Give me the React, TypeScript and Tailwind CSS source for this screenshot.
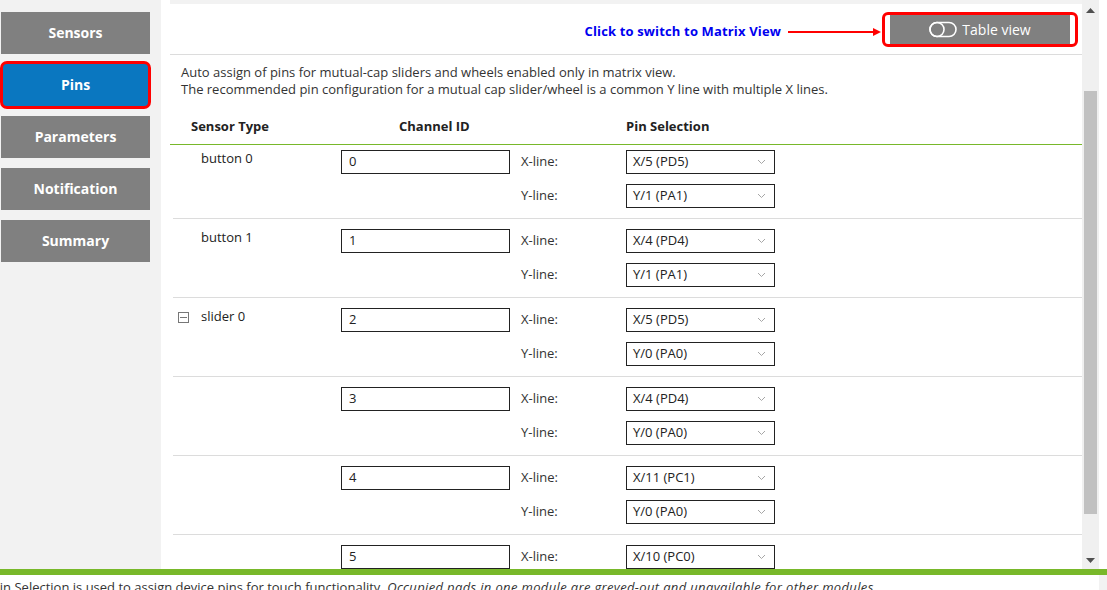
import React from 'react';

type PinRow = {
  name: string;
  group?: boolean;
  channel: string;
  x: string;
  y: string;
};

const rows: PinRow[] = [
  { name: 'button 0', channel: '0', x: 'X/5 (PD5)', y: 'Y/1 (PA1)' },
  { name: 'button 1', channel: '1', x: 'X/4 (PD4)', y: 'Y/1 (PA1)' },
  { name: 'slider 0', group: true, channel: '2', x: 'X/5 (PD5)', y: 'Y/0 (PA0)' },
  { name: '', channel: '3', x: 'X/4 (PD4)', y: 'Y/0 (PA0)' },
  { name: '', channel: '4', x: 'X/11 (PC1)', y: 'Y/0 (PA0)' },
  { name: '', channel: '5', x: 'X/10 (PC0)', y: 'Y/0 (PA0)' },
];

const navItems = ['Sensors', 'Pins', 'Parameters', 'Notification', 'Summary'];

const Chevron: React.FC = () => (
  <svg width="9" height="6" viewBox="0 0 9 6" className="shrink-0">
    <path d="M1 1l3.5 3.5L8 1" fill="none" stroke="#a6a6a6" strokeWidth="1" />
  </svg>
);

const PinSelect: React.FC<{ value: string }> = ({ value }) => (
  <div className="box-border flex h-[24px] w-[149px] items-center justify-between border border-[#222] bg-white pl-[6px] pr-[8px] text-[#222]">
    <span>{value}</span>
    <Chevron />
  </div>
);

const Sidebar: React.FC = () => (
  <aside className="flex w-[161px] shrink-0 flex-col gap-[10px] bg-[#f2f2f2] pt-[12px]">
    {navItems.map((item) =>
      item === 'Pins' ? (
        <div
          key={item}
          className="-my-[3px] box-border flex h-[48px] w-[151px] items-center justify-center rounded-[7px] border-[3px] border-[#f00] bg-[#0a77c0] pb-[1px] text-[14px] font-bold text-white"
        >
          {item}
        </div>
      ) : (
        <div
          key={item}
          className="ml-[1px] flex h-[42px] w-[149px] items-center justify-center bg-[#808080] pb-[2px] text-[14px] font-bold text-white"
        >
          {item}
        </div>
      )
    )}
  </aside>
);

const Header: React.FC = () => (
  <div className="box-border flex h-[51px] shrink-0 items-center justify-end border-b border-[#dcdcdc] pr-[4px]">
    <span className="mt-[6px] font-bold tracking-[0.15px] text-[#0000f0]">Click to switch to Matrix View</span>
    <svg width="95" height="10" viewBox="0 0 95 10" className="ml-[6px] mt-[6px]">
      <line x1="1" y1="5" x2="88" y2="5" stroke="#f00" strokeWidth="2" />
      <path d="M86 1l8 4-8 4z" fill="#f00" />
    </svg>
    <div className="box-border flex h-[35px] items-center rounded-[6px] border-[3px] border-[#f00] px-[5px]">
      <button className="flex h-[29px] w-[180px] items-center justify-center gap-[5px] bg-[#808080] text-[14px] text-white">
        <svg width="28" height="17" viewBox="0 0 28 17">
          <rect x="1" y="1.5" width="26" height="14" rx="7" fill="none" stroke="white" strokeWidth="1.6" />
          <circle cx="8" cy="8.5" r="7" fill="none" stroke="white" strokeWidth="1.6" />
        </svg>
        Table view
      </button>
    </div>
  </div>
);

const Row: React.FC<{ row: PinRow; first: boolean }> = ({ row, first }) => (
  <div
    className={`ml-[3px] flex shrink-0 border-b border-[#dcdcdc] pb-[10px] ${first ? 'pt-[5px]' : 'pt-[10px]'}`}
  >
    <div className={`flex w-[168px] items-start ${row.group ? 'pl-[5px]' : 'pl-[28px]'}`}>
      {row.group && (
        <span className="mr-[12px] mt-[4px] flex h-[11px] w-[11px] items-center justify-center border border-[#777]">
          <span className="h-px w-[7px] bg-[#777]" />
        </span>
      )}
      <span className="-mt-[1px] leading-[18px] text-[#222]">{row.name}</span>
    </div>
    <div className="box-border flex h-[24px] w-[169px] items-center border border-[#222] pl-[7px] text-[#222]">
      {row.channel}
    </div>
    <div className="flex flex-col gap-[10px]">
      <div className="flex h-[24px] items-center">
        <span className="w-[116px] pl-[11px]">X-line:</span>
        <PinSelect value={row.x} />
      </div>
      <div className="flex h-[24px] items-center">
        <span className="w-[116px] pl-[11px]">Y-line:</span>
        <PinSelect value={row.y} />
      </div>
    </div>
  </div>
);

const Scrollbar: React.FC = () => (
  <div className="flex w-[17px] shrink-0 flex-col items-center bg-[#f0f0f0]">
    <svg width="9" height="5" viewBox="0 0 9 5" className="mt-[8px]">
      <path d="M0 5L4.5 0 9 5z" fill="#505050" />
    </svg>
    <div className="mt-[78px] h-[423px] w-[13px] bg-[#c1c1c1]" />
    <svg width="9" height="5" viewBox="0 0 9 5" className="mt-[44px]">
      <path d="M0 0h9L4.5 5z" fill="#505050" />
    </svg>
  </div>
);

export default function App() {
  return (
    <div className="flex h-[590px] w-[1107px] flex-col overflow-hidden bg-white font-['Open_Sans',sans-serif] text-[13px] text-[#333]">
      <div className="flex min-h-0 flex-1">
        <Sidebar />
        <main className="flex min-w-0 flex-1 pl-[9px]">
          <div className="flex min-w-0 flex-1 flex-col overflow-hidden border-t-4 border-[#f2f2f2]">
            <Header />
            <div className="shrink-0 pl-[11px] pt-[9px] leading-[17px]">
              <p>Auto assign of pins for mutual-cap sliders and wheels enabled only in matrix view.</p>
              <p>The recommended pin configuration for a mutual cap slider/wheel is a common Y line with multiple X lines.</p>
            </div>
            <div className="flex shrink-0 border-b border-[#78b82a] pb-[9px] pt-[19px] font-bold leading-[18px] text-[#222]">
              <span className="w-[229px] pl-[21px]">Sensor Type</span>
              <span className="w-[227px]">Channel ID</span>
              <span>Pin Selection</span>
            </div>
            {rows.map((r, i) => (
              <Row key={i} row={r} first={i === 0} />
            ))}
          </div>
          <Scrollbar />
          <div className="w-[8px] shrink-0" />
        </main>
      </div>
      <div className="h-[6px] shrink-0 bg-[#78b82a]" />
      <div className="flex h-[15px] shrink-0">
        <p className="-ml-[8px] flex-1 whitespace-nowrap pt-[3px] leading-[18px] text-[#333]">
          Pin Selection is used to assign device pins for touch functionality.{' '}
          <em className="tracking-[0.35px]">Occupied pads in one module are greyed-out and unavailable for other modules.</em>
        </p>
        <div className="w-[8px] bg-[#f2f2f2]" />
      </div>
    </div>
  );
}
